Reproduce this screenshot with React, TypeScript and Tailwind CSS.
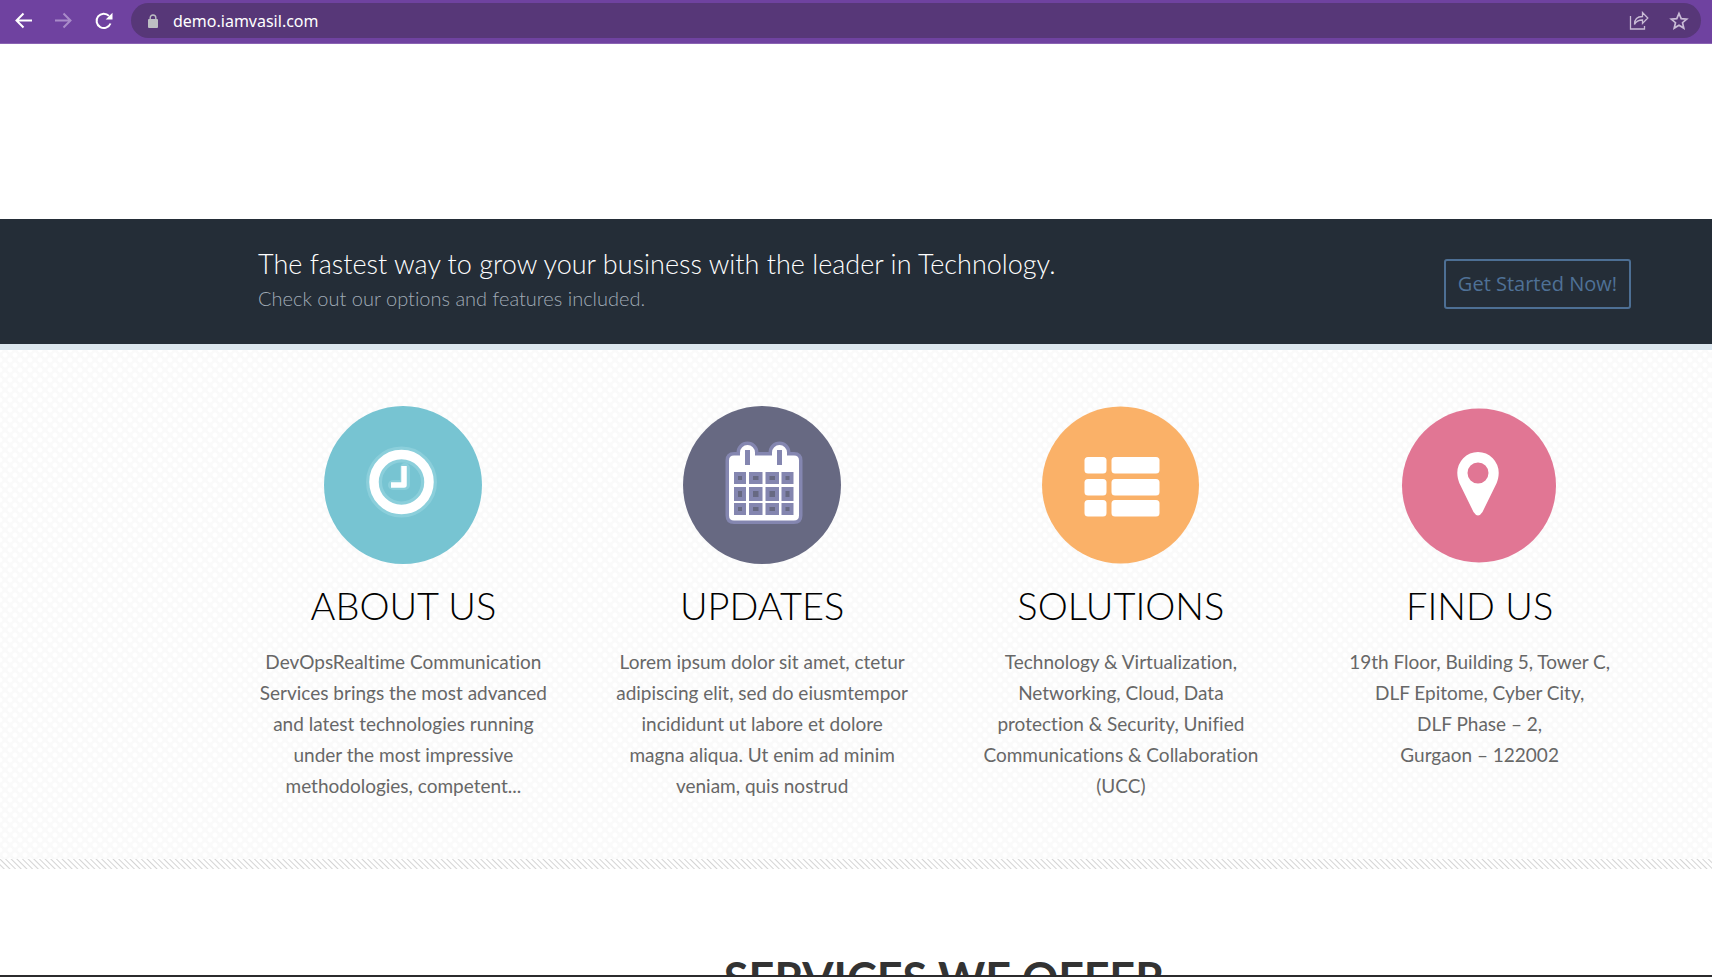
import type { ReactNode } from "react";

const dots =
  "bg-[radial-gradient(circle_at_center,#ffffff_0,#ffffff_2px,transparent_3px),radial-gradient(circle_at_center,#ffffff_0,#ffffff_2px,transparent_3px)] bg-[length:10px_10px] bg-[position:0_0,5px_5px] bg-[#fafafa]";
const stripes = "bg-[repeating-linear-gradient(45deg,#ffffff_0,#ffffff_2px,#d4d4d4_3px,#ffffff_4px)]";

function ClockIcon() {
  return (
    <svg viewBox="0 0 158 158" className="size-[158px]" aria-hidden="true">
      <circle cx="79" cy="79" r="79" fill="#77c4d2" />
      <g fill="none" strokeLinecap="round" strokeLinejoin="round">
        <circle cx="77.500" cy="76" r="27.500" stroke="#8bcfdb" strokeWidth="16" />
        <path d="M81 62v17H69" stroke="#8bcfdb" strokeWidth="10" />
        <circle cx="77.500" cy="76" r="27.500" stroke="#fff" strokeWidth="9.500" />
        <path d="M80 60v19H67" stroke="#fff" strokeWidth="5.500" strokeLinecap="butt" />
      </g>
    </svg>
  );
}

function CalendarIcon() {
  const cols = [51, 66, 82.5, 98.5];
  const widths = [12, 13.5, 13.5, 12];
  const rows = [66, 81, 97];
  const heights = [12, 14, 12];
  const body =
    "M46 54.500q0-5 5-5h6v-3a7.500 7.500 0 0 1 15 0v3h17v-3a7.500 7.500 0 0 1 15 0v3h7q5 0 5 5v55q0 5-5 5H51q-5 0-5-5z";
  return (
    <svg viewBox="0 0 158 158" className="size-[158px]" aria-hidden="true">
      <circle cx="79" cy="79" r="79" fill="#676982" />
      <path d={body} fill="#8486b0" stroke="#8486b0" strokeWidth="7" strokeLinejoin="round" />
      <path d={body} fill="#fff" />
      <rect x="62" y="44" width="5" height="15" fill="#8486b0" />
      <rect x="94" y="44" width="5" height="15" fill="#8486b0" />
      {rows.map((y, r) =>
        cols.map((x, c) => (
          <g key={`${r}-${c}`}>
            <rect x={x} y={y} width={widths[c]} height={heights[r]} fill="#8486b0" />
            <rect x={x + 4} y={y + 4} width={widths[c] - 8} height={heights[r] - 8} fill="#676982" />
          </g>
        )),
      )}
    </svg>
  );
}

function ListIcon() {
  return (
    <svg viewBox="0 0 158 158" className="size-[158px]" aria-hidden="true">
      <circle cx="78.500" cy="79" r="78.500" fill="#fab168" />
      {[51, 73, 94].map((y) => (
        <g key={y} fill="#fff">
          <rect x="42.500" y={y} width="22" height="16.500" rx="3.500" />
          <rect x="69.500" y={y} width="48" height="16.500" rx="3.500" />
        </g>
      ))}
    </svg>
  );
}

function PinIcon() {
  return (
    <svg viewBox="0 0 158 158" className="size-[158px]" aria-hidden="true">
      <circle cx="78" cy="79.500" r="77" fill="#e17694" />
      <path
        fillRule="evenodd"
        fill="#fff"
        d="M77 46a20.700 20.700 0 0 1 20.700 21c0 4-1 7-2 10L81.500 106q-4.500 7-9 0L58.300 77c-1-3-2-6-2-10A20.700 20.700 0 0 1 77 46zm0 10.500a10.500 10.500 0 1 0 0 21 10.500 10.500 0 0 0 0-21z"
      />
    </svg>
  );
}

type Feature = { title: string; icon: ReactNode; lines: string[] };

const features: Feature[] = [
  {
    title: "ABOUT US",
    icon: <ClockIcon />,
    lines: [
      "DevOpsRealtime Communication",
      "Services brings the most advanced",
      "and latest technologies running",
      "under the most impressive",
      "methodologies, competent...",
    ],
  },
  {
    title: "UPDATES",
    icon: <CalendarIcon />,
    lines: [
      "Lorem ipsum dolor sit amet, ctetur",
      "adipiscing elit, sed do eiusmtempor",
      "incididunt ut labore et dolore",
      "magna aliqua. Ut enim ad minim",
      "veniam, quis nostrud",
    ],
  },
  {
    title: "SOLUTIONS",
    icon: <ListIcon />,
    lines: [
      "Technology & Virtualization,",
      "Networking, Cloud, Data",
      "protection & Security, Unified",
      "Communications & Collaboration",
      "(UCC)",
    ],
  },
  {
    title: "FIND US",
    icon: <PinIcon />,
    lines: ["19th Floor, Building 5, Tower C,", "DLF Epitome, Cyber City,", "DLF Phase – 2,", "Gurgaon – 122002"],
  },
];

function BrowserBar() {
  return (
    <header className="flex h-11 shrink-0 items-start border-b border-[#8a63b3] bg-[#6f42a0] pt-[3px] pr-[11px] pl-[14px]">
      <div className="flex h-[35px] items-center gap-[20px] text-white">
        <button type="button" aria-label="Back" className="size-5">
          <svg viewBox="0 0 20 20" className="size-5" fill="none" stroke="currentColor" strokeWidth="2">
            <path d="M18 9.500H3M9.500 2.500L2.500 9.500l7 7" />
          </svg>
        </button>
        <button type="button" aria-label="Forward" className="size-5 text-[#a98bc9]">
          <svg viewBox="0 0 20 20" className="size-5" fill="none" stroke="currentColor" strokeWidth="2">
            <path d="M1 9.500h15M9.500 2.500l7 7-7 7" />
          </svg>
        </button>
        <button type="button" aria-label="Reload" className="size-5">
          <svg viewBox="0 0 20 20" className="size-5" fill="none" stroke="currentColor" strokeWidth="2">
            <path d="M16.500 12.500A7.200 7.200 0 1 1 15 4.900" />
            <path d="M18.500 1.800v6.800h-6.800z" fill="currentColor" stroke="none" />
          </svg>
        </button>
      </div>
      <div className="ml-[17px] flex h-[35px] flex-1 items-center rounded-full bg-[#573778] pr-[12px] pl-[16px]">
        <svg viewBox="0 0 12 14" className="h-[14px] w-3 shrink-0" aria-hidden="true">
          <path d="M3.200 6V3.800a2.800 2.800 0 0 1 5.600 0V6" fill="none" stroke="#bdbfc3" strokeWidth="1.400" />
          <rect x="1" y="5" width="10" height="9" rx="1" fill="#bdbfc3" />
        </svg>
        <input
          aria-label="Address"
          defaultValue="demo.iamvasil.com"
          className="ml-[14px] min-w-0 flex-1 bg-transparent font-['Noto_Sans',sans-serif] text-[16px] text-white outline-none"
        />
        <div className="flex gap-[20px] text-[#c9bcd6]">
          <button type="button" aria-label="Share" className="size-5">
            <svg viewBox="0 0 20 20" className="size-5" fill="none" stroke="currentColor" strokeWidth="1.300">
              <path d="M1.500 5v13h14v-3" />
              <path d="M5.500 13.500c0-5.500 3-8 8-8V1.500l5.300 5.500-5.300 5.500V9c-4 0-6.300 1-8 4.500z" />
            </svg>
          </button>
          <button type="button" aria-label="Bookmark" className="size-5">
            <svg viewBox="0 0 20 20" className="size-5" fill="none" stroke="currentColor" strokeWidth="1.700">
              <path d="M10 2.500l2.200 5.100 5.500.5-4.200 3.600 1.300 5.400-4.800-2.900-4.800 2.900 1.300-5.400L2.300 8.100l5.500-.5z" />
            </svg>
          </button>
        </div>
      </div>
    </header>
  );
}

export default function App() {
  return (
    <div className="flex h-screen flex-col overflow-hidden bg-white font-['Lato',sans-serif] [font-variant-ligatures:no-common-ligatures]">
      <BrowserBar />
      <main className="flex min-h-0 flex-1 flex-col overflow-hidden border-b-2 border-[#2b2b2d]">
        <section className="mt-[175px] flex shrink-0 items-start justify-between border-b-[6px] border-[#dbe6ee] bg-[#242d37] pr-[81px] pl-[258px]">
          <div className="pt-[28px] pb-[29px] font-light">
            <h2 className="text-[27px] leading-[34px] text-white">
              The fastest way to grow your business with the leader in Technology.
            </h2>
            <p className="text-[20px] leading-[34px] text-[#a0abb6]">Check out our options and features included.</p>
          </div>
          <button
            type="button"
            className="mt-[40px] h-[50px] rounded-[3px] border-2 border-[#4d6f94] px-3 font-['Open_Sans',sans-serif] text-[20px] text-[#4f7196]"
          >
            Get Started Now!
          </button>
        </section>

        <section className={`h-[509px] shrink-0 pt-[56px] pr-[53px] pl-[224px] ${dots}`}>
          <div className="grid grid-cols-4">
            {features.map((feature) => (
              <article key={feature.title} className="flex flex-col items-center text-center">
                {feature.icon}
                <h3 className="mt-[17px] text-[38px] leading-[48px] font-light text-black">{feature.title}</h3>
                <p className="mt-[17px] text-[19px] leading-[31px] whitespace-nowrap text-[#676767]">
                  {feature.lines.map((line) => (
                    <span key={line} className="block">
                      {line}
                    </span>
                  ))}
                </p>
              </article>
            ))}
          </div>
        </section>
        <div className={`h-[10px] shrink-0 ${stripes}`} />

        <section className="shrink-0 pt-[80px] pr-[53px] pl-[229px]">
          <h2 className="text-center text-[45px] leading-[58px] font-bold text-[#333333]">SERVICES WE OFFER</h2>
        </section>
      </main>
    </div>
  );
}
